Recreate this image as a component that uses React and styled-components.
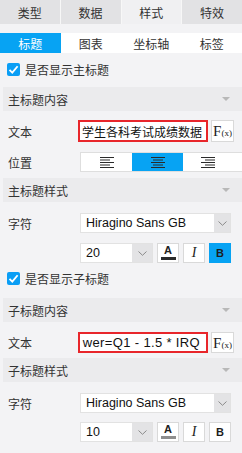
import React from 'react'
import styled, { createGlobalStyle } from 'styled-components'

const GlobalStyle = createGlobalStyle`
  html, body {
    margin: 0;
    padding: 0;
    background: #f3f3f5;
  }
  body {
    font-family: "Liberation Sans", "Noto Sans CJK SC", sans-serif;
    font-size: 12px;
    color: #333;
  }
`

const Panel = styled.div`
  width: 242px;
  height: 453px;
  overflow: hidden;
  background: #f3f3f5;
`

const TabBar = styled.div`
  display: grid;
  grid-template-columns: repeat(4, 1fr);
  gap: 1px;
  height: 24px;
  background: #f7f7f7;
`

const Tab = styled.div`
  display: flex;
  align-items: center;
  justify-content: center;
  background: ${p => (p.$active ? '#f0f0f2' : '#e2e2e4')};
  color: #333;
`

const SubBar = styled.div`
  display: grid;
  grid-template-columns: repeat(4, 1fr);
  height: 20px;
  margin-top: 9px;
  background: #fff;
`

const SubTab = styled.div`
  display: flex;
  align-items: center;
  justify-content: center;
  background: ${p => (p.$active ? '#07a3f3' : 'transparent')};
  color: ${p => (p.$active ? '#fff' : '#333')};
`

const CheckRow = styled.div`
  display: flex;
  align-items: center;
  gap: 5px;
  height: 13px;
  padding: ${p => p.$top}px 7px ${p => p.$bottom}px;
`

const Box = styled.span`
  display: flex;
  align-items: center;
  justify-content: center;
  width: 13px;
  height: 13px;
  border-radius: 2px;
  background: #0a9ef5;
`

const SectionHead = styled.div`
  display: flex;
  align-items: center;
  justify-content: space-between;
  height: 24px;
  margin-left: 3px;
  padding: 0 12px 0 5px;
  background: #ebebed;
`

const Caret = styled.span`
  width: 0;
  height: 0;
  border-left: 4px solid transparent;
  border-right: 4px solid transparent;
  border-top: 4px solid #b8b8b8;
`

const SectionBody = styled.div`
  display: flex;
  flex-direction: column;
  gap: ${p => p.$gap ?? 10}px;
  padding: ${p => p.$top}px 0 ${p => p.$bottom}px;
`

const Row = styled.div`
  display: flex;
  align-items: center;
  height: ${p => p.$h || 20}px;
`

const Label = styled.div`
  flex: none;
  box-sizing: border-box;
  width: ${p => p.$w || 80}px;
  padding-left: 8px;
`

const TextField = styled.div`
  display: flex;
  justify-content: flex-end;
  align-items: center;
  box-sizing: border-box;
  width: 130px;
  height: 100%;
  padding: 0 ${p => (p.$latin ? 6 : 4)}px 0 3px;
  border: 2px solid #e8262b;
  background: #fff;
  overflow: hidden;
  white-space: nowrap;
  color: #111;
  font-size: ${p => (p.$latin ? 13 : 12)}px;
  letter-spacing: ${p => (p.$latin ? 0.35 : 0)}px;
`

const FxButton = styled.div`
  display: flex;
  align-items: baseline;
  justify-content: center;
  box-sizing: border-box;
  width: 23px;
  height: 100%;
  margin-left: 3px;
  padding-top: 2px;
  border: 1px solid #d9d9d9;
  background: #fff;
  font-family: "Liberation Serif", serif;
  color: #222;
`

const FxBig = styled.span`
  font-size: 15px;
`

const FxSmall = styled.span`
  font-size: 9px;
`

const Segmented = styled.div`
  display: grid;
  grid-template-columns: 51px 51px 1fr;
  flex: 1;
  height: 100%;
  box-sizing: border-box;
  border: 1px solid #dedede;
  border-right: none;
  background: #fff;
`

const Segment = styled.div`
  display: flex;
  align-items: center;
  justify-content: center;
  background: ${p => (p.$active ? '#07a3f3' : 'transparent')};
  padding-right: ${p => (p.$last ? 9 : 0)}px;
`

const Select = styled.div`
  display: flex;
  box-sizing: border-box;
  width: ${p => p.$w}px;
  height: 100%;
  border: 1px solid #e2e2e2;
  background: #fff;
`

const SelectText = styled.div`
  display: flex;
  align-items: center;
  flex: 1;
  padding-left: 5px;
  font-size: 12.5px;
  color: #111;
`

const SelectArrow = styled.div`
  display: flex;
  align-items: center;
  justify-content: center;
  width: ${p => p.$w}px;
  background: #e3e3e5;
`

const Tools = styled.div`
  display: flex;
  gap: 4px;
  height: 100%;
  margin-left: 4px;
`

const ToolButton = styled.div`
  display: flex;
  flex-direction: column;
  align-items: center;
  justify-content: center;
  box-sizing: border-box;
  width: 22px;
  height: 100%;
  border: 1px solid ${p => (p.$active ? '#07a3f3' : '#d9d9d9')};
  background: ${p => (p.$active ? '#07a3f3' : '#fff')};
  color: #222;
`

const ColorA = styled.span`
  font-size: 11px;
  font-weight: bold;
  line-height: 9px;
`

const ColorBar = styled.span`
  width: 15px;
  height: 3px;
  margin-top: 2px;
  background: ${p => p.$color};
`

const Italic = styled.span`
  font-family: "Liberation Serif", serif;
  font-style: italic;
  font-size: 14px;
`

const Bold = styled.span`
  font-weight: bold;
  font-size: 11px;
  color: #1d1d1d;
`

const Check = () => (
  <svg width="11" height="11" viewBox="0 0 11 11">
    <polyline points="1.5,5.8 4.3,8.6 9.6,2.2" fill="none" stroke="#fff" strokeWidth="1.8" />
  </svg>
)

const Chevron = () => (
  <svg width="9" height="5" viewBox="0 0 9 5">
    <polyline points="0.5,0.5 4.5,4.3 8.5,0.5" fill="none" stroke="#8a8a8a" strokeWidth="1" />
  </svg>
)

const AlignIcon = ({ mode }) => {
  const lines = [14, 10, 14, 10, 14]
  return (
    <svg width="14" height="11" viewBox="0 0 14 11">
      {lines.map((w, i) => {
        const x = mode === 'left' ? 0 : mode === 'right' ? 14 - w : (14 - w) / 2
        return <rect key={i} x={x} y={i * 2.5} width={w} height="1" fill="#2a2a2a" />
      })}
    </svg>
  )
}

const FontSelect = ({ font, size, bold, barColor }) => (
  <>
    <Row>
      <Label>字符</Label>
      <Select $w={151}>
        <SelectText>{font}</SelectText>
        <SelectArrow $w={16}><Chevron /></SelectArrow>
      </Select>
    </Row>
    <Row>
      <Label />
      <Select $w={73}>
        <SelectText>{size}</SelectText>
        <SelectArrow $w={20}><Chevron /></SelectArrow>
      </Select>
      <Tools>
        <ToolButton>
          <ColorA>A</ColorA>
          <ColorBar $color={barColor} />
        </ToolButton>
        <ToolButton><Italic>I</Italic></ToolButton>
        <ToolButton $active={bold}><Bold>B</Bold></ToolButton>
      </Tools>
    </Row>
  </>
)

export default function App() {
  const tabs = ['类型', '数据', '样式', '特效']
  const subTabs = ['标题', '图表', '坐标轴', '标签']

  return (
    <Panel>
      <GlobalStyle />
      <TabBar>
        {tabs.map(t => <Tab key={t} $active={t === '样式'}>{t}</Tab>)}
      </TabBar>
      <SubBar>
        {subTabs.map(t => <SubTab key={t} $active={t === '标题'}>{t}</SubTab>)}
      </SubBar>

      <CheckRow $top={10} $bottom={11}>
        <Box><Check /></Box>
        <span>是否显示主标题</span>
      </CheckRow>

      <SectionHead>主标题内容<Caret /></SectionHead>
      <SectionBody $top={9} $bottom={6}>
        <Row $h={22}>
          <Label $w={78}>文本</Label>
          <TextField>学生各科考试成绩数据</TextField>
          <FxButton><FxBig>F</FxBig><FxSmall>(x)</FxSmall></FxButton>
        </Row>
        <Row>
          <Label>位置</Label>
          <Segmented>
            <Segment><AlignIcon mode="left" /></Segment>
            <Segment $active><AlignIcon mode="center" /></Segment>
            <Segment $last><AlignIcon mode="right" /></Segment>
          </Segmented>
        </Row>
      </SectionBody>

      <SectionHead>主标题样式<Caret /></SectionHead>
      <SectionBody $top={11} $bottom={0}>
        <FontSelect font="Hiragino Sans GB" size="20" bold barColor="#2b2b2b" />
      </SectionBody>

      <CheckRow $top={9} $bottom={13}>
        <Box><Check /></Box>
        <span>是否显示子标题</span>
      </CheckRow>

      <SectionHead>子标题内容<Caret /></SectionHead>
      <SectionBody $top={10} $bottom={5}>
        <Row $h={21}>
          <Label $w={78}>文本</Label>
          <TextField $latin>wer=Q1 - 1.5 * IRQ</TextField>
          <FxButton><FxBig>F</FxBig><FxSmall>(x)</FxSmall></FxButton>
        </Row>
      </SectionBody>

      <SectionHead>子标题样式<Caret /></SectionHead>
      <SectionBody $top={11} $bottom={0} $gap={9}>
        <FontSelect font="Hiragino Sans GB" size="10" barColor="#8e8e8e" />
      </SectionBody>
    </Panel>
  )
}
